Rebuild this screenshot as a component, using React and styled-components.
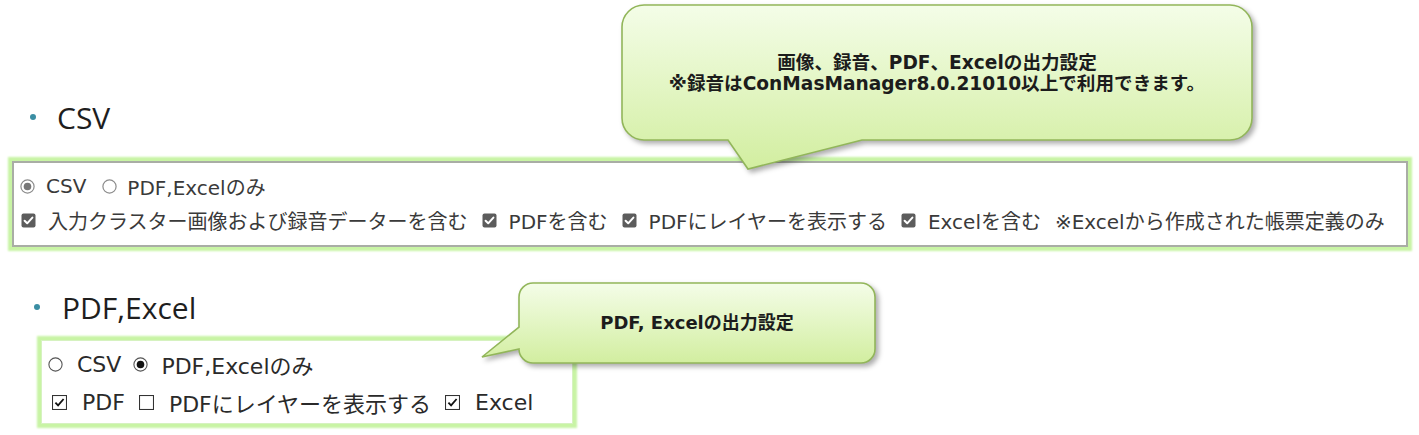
import React from "react";
import styled, { createGlobalStyle } from "styled-components";

const Global = createGlobalStyle`
  html, body { margin: 0; padding: 0; background: #fff; }
  body { font-family: "Open Sans", "Noto Sans CJK JP", sans-serif; }
`;

const Page = styled.div`
  position: relative;
  width: 1419px;
  height: 435px;
  overflow: hidden;
  display: flex;
  flex-direction: column;
`;

const Heading = styled.div`
  display: flex;
  align-items: center;
  gap: ${(p) => p.$gap}px;
  margin: ${(p) => p.$top}px 0 0 ${(p) => p.$left}px;
  height: 40px;
  font-family: "Open Sans", "Noto Sans CJK JP", sans-serif;
  font-size: 30px;
  color: #1e1e1e;
  &::before {
    content: "";
    width: 6px;
    height: 6px;
    border-radius: 50%;
    background: #3b8ea3;
  }
`;

const OptionBox = styled.div`
  display: flex;
  flex-direction: column;
  margin: ${(p) => p.$top}px 0 0 ${(p) => p.$left}px;
  width: ${(p) => p.$width}px;
  box-sizing: border-box;
  background: #fff;
  border: ${(p) => (p.$dark ? "2px solid #a9ada5" : "1px solid #d6f2c0")};
  box-shadow: 0 0 2px 4px #c8f4a4;
  padding: ${(p) => p.$pad};
  font-family: "DejaVu Sans", "Noto Sans CJK JP", sans-serif;
  font-size: ${(p) => p.$size}px;
  color: ${(p) => (p.$dark ? "#3a3a3a" : "#2a2a2a")};
`;

const Row = styled.div`
  display: flex;
  align-items: center;
  height: ${(p) => p.$h}px;
  padding-left: ${(p) => p.$indent}px;
  gap: ${(p) => p.$gap}px;
  white-space: nowrap;
`;

const Item = styled.span`
  display: inline-flex;
  align-items: center;
  gap: ${(p) => p.$gap}px;
`;

const Icon = styled.svg`
  flex: none;
  display: block;
`;

function RadioSoft({ checked }) {
  return (
    <Icon width="15" height="15" viewBox="0 0 15 15">
      <circle cx="7.5" cy="7.5" r="6.6" fill="#fff" stroke="#8c8c8c" strokeWidth="1.2" />
      {checked && <circle cx="7.5" cy="7.5" r="3.8" fill="#777" />}
    </Icon>
  );
}

function CheckFilled() {
  return (
    <Icon width="15" height="15" viewBox="0 0 15 15">
      <rect x="0.5" y="0.5" width="14" height="14" rx="2" fill="#5c5c5c" />
      <path d="M3.6 7.8 L6.2 10.3 L11.4 4.6" fill="none" stroke="#fff" strokeWidth="2" strokeLinecap="round" strokeLinejoin="round" />
    </Icon>
  );
}

function RadioPlain({ checked }) {
  return (
    <Icon width="15" height="15" viewBox="0 0 15 15">
      <circle cx="7.5" cy="7.5" r="6.6" fill="#fff" stroke="#555" strokeWidth="1.1" />
      {checked && <circle cx="7.5" cy="7.5" r="3.8" fill="#111" />}
    </Icon>
  );
}

function CheckPlain({ checked }) {
  return (
    <Icon width="15" height="15" viewBox="0 0 15 15">
      <rect x="0.5" y="0.5" width="14" height="14" fill="#fff" stroke="#333" strokeWidth="1.1" />
      {checked && (
        <path d="M3.4 7.6 L6.1 10.4 L11.6 4" fill="none" stroke="#111" strokeWidth="1.8" />
      )}
    </Icon>
  );
}

const CalloutWrap = styled.div`
  position: absolute;
  left: ${(p) => p.$x}px;
  top: ${(p) => p.$y}px;
  width: ${(p) => p.$w}px;
  height: ${(p) => p.$h}px;
  z-index: 5;
`;

const CalloutShape = styled.svg`
  position: absolute;
  left: 0;
  top: 0;
  overflow: visible;
  filter: drop-shadow(3px 3px 2.5px rgba(0, 0, 0, 0.32));
`;

const CalloutText = styled.div`
  position: relative;
  height: 100%;
  box-sizing: border-box;
  display: flex;
  flex-direction: column;
  align-items: center;
  justify-content: center;
  padding-top: ${(p) => p.$padTop || 0}px;
  font-family: "DejaVu Sans", "Noto Sans CJK JP", sans-serif;
  font-weight: bold;
  font-size: ${(p) => p.$size}px;
  line-height: ${(p) => p.$lh}px;
  color: #1c1c1c;
  white-space: nowrap;
`;

function Callout({ id, x, y, w, h, path, size, lh, padTop, children }) {
  return (
    <CalloutWrap $x={x} $y={y} $w={w} $h={h}>
      <CalloutShape width={w} height={h} viewBox={`0 0 ${w} ${h}`}>
        <defs>
          <linearGradient id={id} x1="0" y1="0" x2="0" y2="1">
            <stop offset="0" stopColor="#f4fde8" />
            <stop offset="1" stopColor="#d2eea0" />
          </linearGradient>
        </defs>
        <path d={path} fill={`url(#${id})`} stroke="#92b65a" strokeWidth="1.6" />
      </CalloutShape>
      <CalloutText $size={size} $lh={lh} $padTop={padTop}>
        {children}
      </CalloutText>
    </CalloutWrap>
  );
}

const path1 =
  "M22,0 H608 A22,22 0 0 1 630,22 V113 A22,22 0 0 1 608,135 H240 L126,164 L106,135 H22 A22,22 0 0 1 0,113 V22 A22,22 0 0 1 22,0 Z";
const path2 =
  "M14,0 H342 A14,14 0 0 1 356,14 V66 A14,14 0 0 1 342,80 H14 A14,14 0 0 1 0,66 L-37,74 L0,44 V14 A14,14 0 0 1 14,0 Z";

export default function App() {
  return (
    <>
      <Global />
      <Page>
        <Heading $top={97} $left={30} $gap={21}>CSV</Heading>
        <OptionBox $dark $size={20} $top={24} $left={12} $width={1396} $pad="6px 8px 8px 6px">
          <Row $h={34} $indent={0} $gap={16}>
            <Item $gap={11}><RadioSoft checked />CSV</Item>
            <Item $gap={10}><RadioSoft />PDF,Excelのみ</Item>
          </Row>
          <Row $h={34} $indent={1} $gap={14}>
            <Item $gap={12}><CheckFilled />入力クラスター画像および録音データーを含む</Item>
            <Item $gap={12}><CheckFilled />PDFを含む</Item>
            <Item $gap={12}><CheckFilled />PDFにレイヤーを表示する</Item>
            <Item $gap={12}><CheckFilled />Excelを含む</Item>
            <span>※Excelから作成された帳票定義のみ</span>
          </Row>
        </OptionBox>

        <Heading $top={40} $left={34} $gap={22}>PDF,Excel</Heading>
        <OptionBox $size={22} $top={13} $left={41} $width={532} $pad="4px 8px 2px 6px">
          <Row $h={38} $indent={0} $gap={12}>
            <Item $gap={14}><RadioPlain />CSV</Item>
            <Item $gap={13}><RadioPlain checked />PDF,Excelのみ</Item>
          </Row>
          <Row $h={38} $indent={4} $gap={14}>
            <Item $gap={15}><CheckPlain checked />PDF</Item>
            <Item $gap={15}><CheckPlain />PDFにレイヤーを表示する</Item>
            <Item $gap={15}><CheckPlain checked />Excel</Item>
          </Row>
        </OptionBox>

        <Callout id="g1" x={622} y={5} w={630} h={135} path={path1} size={18.6} lh={21} padTop={-3}>
          <span>画像、録音、PDF、Excelの出力設定</span>
          <span>※録音はConMasManager8.0.21010以上で利用できます。</span>
        </Callout>
        <Callout id="g2" x={519} y={283} w={356} h={80} path={path2} size={18} lh={24} padTop={-4}>
          <span>PDF, Excelの出力設定</span>
        </Callout>
      </Page>
    </>
  );
}
